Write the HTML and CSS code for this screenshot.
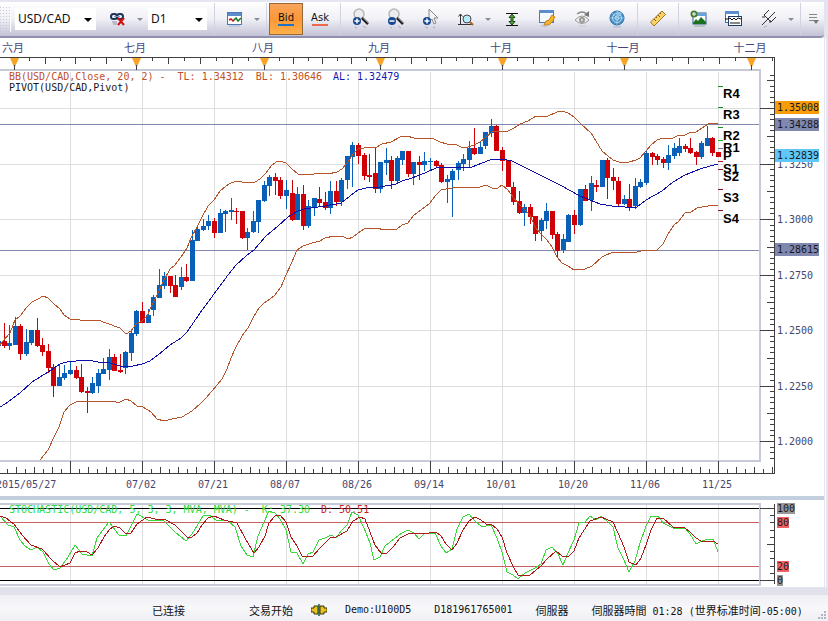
FILE: index.html
```html
<!DOCTYPE html>
<html lang="zh">
<head>
<meta charset="utf-8">
<title>USD/CAD D1</title>
<link rel="stylesheet" href="styles.css">
</head>
<body>
<header class="toolbar">
  <span class="grip"></span>
  <label class="picker picker-symbol"><select aria-label="Symbol"><option>USD/CAD</option></select></label>
  <button class="tool" aria-label="Unlink symbol">
    <svg width="18" height="18" viewBox="0 0 18 18"><g fill="none" stroke="#1d3558" stroke-width="2"><rect x="2" y="4" width="6" height="5" rx="2.5"/><rect x="8" y="4" width="6" height="5" rx="2.5"/></g><path d="M5 6.5h6" stroke="#7d9cc4" stroke-width="1"/><path d="M3 12h5M4 14h4" stroke="#aab" stroke-width="1.5"/><path d="m9 8 6 7m0-7-6 7" stroke="#d01010" stroke-width="2"/></svg>
  </button>
  <button class="drop" aria-label="Link options"></button>
  <label class="picker picker-period"><select aria-label="Period"><option>D1</option></select></label>
  <span class="sep"></span>
  <button class="tool" aria-label="Chart type">
    <svg width="16" height="18" viewBox="0 0 16 18"><rect x=".5" y="2.500" width="14" height="12" fill="#fff" stroke="#4a78b8"/><path d="M1 3h13v3H1z" fill="#5c8ccc"/><path d="m2 10 2-1 2 2 2-2" fill="none" stroke="#c01818" stroke-width="1.500"/><path d="m7 10 2-2 2 3 3-3" fill="none" stroke="#18802c" stroke-width="1.500"/><path d="M2 16h11" stroke="#a8b4cc"/></svg>
  </button>
  <button class="drop" aria-label="Chart type options"></button>
  <span class="sep"></span>
  <button class="side side-bid">Bid</button>
  <button class="side side-ask">Ask</button>
  <span class="sep"></span>
  <button class="tool" aria-label="Zoom in">
    <svg width="18" height="22" viewBox="0 0 18 22"><circle cx="7" cy="6" r="5" fill="#ececec" stroke="#b8b8b8" stroke-width="1.500"/><path d="m10 10 6 6" stroke="#222" stroke-width="2.500"/><path d="m11 10 5 5" stroke="#999" stroke-width=".7"/><circle cx="5" cy="13" r="4" fill="#184890"/><path d="M2.500 13h5M5 10.500v5" stroke="#fff" stroke-width="1.500"/><path d="m3 19 2 1m6-2 3 2" stroke="#a8a8b8"/></svg>
  </button>
  <button class="tool" aria-label="Zoom out">
    <svg width="18" height="22" viewBox="0 0 18 22"><circle cx="7" cy="6" r="5" fill="#ececec" stroke="#b8b8b8" stroke-width="1.500"/><path d="m10 10 6 6" stroke="#222" stroke-width="2.500"/><path d="m11 10 5 5" stroke="#999" stroke-width=".7"/><circle cx="5" cy="13" r="4" fill="#184890"/><path d="M2.500 13h5" stroke="#fff" stroke-width="1.500"/><path d="m3 19 2 1m6-2 3 2" stroke="#a8a8b8"/></svg>
  </button>
  <button class="tool" aria-label="Zoom to selection">
    <svg width="18" height="22" viewBox="0 0 18 22"><path d="M7 1v13l3-3 2 5 2-1-2-5h4z" fill="#f4f4f4" stroke="#888"/><circle cx="5" cy="13" r="4" fill="#184890"/><path d="M2.500 13h5M5 10.500v5" stroke="#fff" stroke-width="1.500"/><path d="m3 19 3 1m5-1 2 1" stroke="#a8a8b8"/></svg>
  </button>
  <button class="tool" aria-label="Fit scale">
    <svg width="18" height="18" viewBox="0 0 18 18"><path d="M3.500 4v11M1.500 6.500l2-2.500 2 2.500M1 14.500h14" fill="none" stroke="#333"/><circle cx="10" cy="9" r="4" fill="#b8ecf8" stroke="#445"/><path d="m13 12 3 3" stroke="#b06020" stroke-width="2"/></svg>
  </button>
  <button class="drop" aria-label="Scale options"></button>
  <button class="tool" aria-label="Fit vertically">
    <svg width="16" height="18" viewBox="0 0 16 18"><path d="M2 3.500h12M2 15.500h12" stroke="#111"/><path d="m8 4 3 3.500H9v4h2L8 15l-3-3.500h2v-4H5z" fill="#4c9c38" stroke="#1c4c18"/></svg>
  </button>
  <button class="tool" aria-label="Edit note">
    <svg width="18" height="20" viewBox="0 0 18 20"><rect x="1.500" y="1.500" width="14" height="12" fill="#f4f8ff" stroke="#4a78b8"/><path d="M1 1h15v3H1z" fill="#5c8ccc"/><path d="m6 16 2-4 3-1 3-5 3 2-3 5-3 3z" fill="#f4b428" stroke="#c88418"/><path d="M3 17h6" stroke="#a8b4cc"/></svg>
  </button>
  <button class="tool" aria-label="Show or hide">
    <svg width="18" height="20" viewBox="0 0 18 20"><path d="M2 11q7-8 14 0-7 7-14 0z" fill="#eee" stroke="#999"/><circle cx="9" cy="11" r="3" fill="#999"/><circle cx="9" cy="11" r="1" fill="#eee"/><path d="M4 5q5-4 10 0" fill="none" stroke="#888" stroke-width="1.500"/><path d="M16 2v6l-5-2z" fill="#777"/><path d="M5 17h8" stroke="#ccc"/></svg>
  </button>
  <button class="tool" aria-label="Web">
    <svg width="18" height="20" viewBox="0 0 18 20"><circle cx="9" cy="9" r="7" fill="#4c94cc" stroke="#2c6ca4"/><g fill="none" stroke="#b8dcf0"><circle cx="9" cy="9" r="4.500"/><circle cx="9" cy="9" r="2"/><path d="m9 9 5-5M9 9 4 4M9 2v14M2 9h14" stroke-width=".6"/></g><path d="M9 9V2l5 2z" fill="#8cc4e8"/><path d="M5 18h8" stroke="#a8b8cc"/></svg>
  </button>
  <span class="sep"></span>
  <button class="tool" aria-label="Ruler">
    <svg width="18" height="20" viewBox="0 0 18 20"><path d="M1.500 13 13 2l3.500 3.500L5 17z" fill="#f8d468" stroke="#a87820"/><path d="m5 10 2 2m0-4 1 1m1-3 2 2m0-4 1 1" stroke="#805818"/></svg>
  </button>
  <span class="sep"></span>
  <button class="tool" aria-label="Add image">
    <svg width="18" height="20" viewBox="0 0 18 20"><rect x="3" y="4" width="13" height="11" fill="#fff" stroke="#2c5c90"/><path d="M3 4h13v3H3z" fill="#68a4dc"/><path d="m3 14 3-4 2 2 3-4 5 5v2H3z" fill="#187020"/><circle cx="4" cy="5" r="3.500" fill="#487c30"/><path d="M2 5h4M4 3v4" stroke="#fff"/><path d="M4 17h11" stroke="#98a898"/></svg>
  </button>
  <button class="tool" aria-label="Add indicator">
    <svg width="20" height="20" viewBox="0 0 20 20"><rect x="1.500" y="2.500" width="13" height="11" fill="#fff" stroke="#4070b0"/><path d="M1 2h14v3H1z" fill="#5c8ccc"/><rect x="4.500" y="7.500" width="13" height="9" fill="#fff" stroke="#223c68"/><path d="M1 10h3l2-1 2 2 2-2 2 2 2-2 3 1M6 14h10" fill="none" stroke="#111"/></svg>
  </button>
  <button class="tool" aria-label="Draw lines">
    <svg width="18" height="20" viewBox="0 0 18 20"><path d="M2 16 15 3M4 6l7 7M4 6l5-5M11 13l5-5M2 8h3M10 14v-3" fill="none" stroke="#333"/><path d="m4 18 3-1" stroke="#b4b4c0"/></svg>
  </button>
  <button class="drop" aria-label="Line options"></button>
  <span class="sep"></span>
  <button class="overflow" aria-label="More tools">
    <svg width="10" height="12" viewBox="0 0 10 12"><path d="M0 1.500h8M0 4.500h8M0 7.500h5" stroke="#888"/><path d="M4 7h6l-3 4z" fill="#777"/></svg>
  </button>
</header>
<main class="workspace">
  <svg id="price" class="plot" viewBox="0 38 824 458" role="img" aria-label="USD/CAD price"></svg>
  <div class="splitter"></div>
  <svg id="stochastic" class="plot" viewBox="0 500 824 87" role="img" aria-label="Stochastic"></svg>
</main>
<footer class="status">
  <span class="cjk status-link">已连接</span>
  <span class="cjk">交易开始</span>
  <svg class="plug" width="16" height="12" viewBox="0 0 16 12"><path d="M0 4h3V2h4v8H3V8H0z" fill="#f0c020" stroke="#303808"/><path d="M16 4h-3V2H9v8h4V8h3z" fill="#f0c020" stroke="#303808"/><path d="M8 0v12" stroke="#18583c" stroke-width="1.500"/></svg>
  <span>Demo:U100D5</span>
  <span>D181961765001</span>
  <span class="cjk">伺服器</span>
  <span class="clock"><span class="cjk">伺服器時間</span> 01:28 (<span class="cjk">世界标准时间</span>-05:00)</span>
  <svg class="resize" width="9" height="9" viewBox="0 0 9 9"><path d="M7 1h2M4 4h2m1 0h2M1 7h2m1 0h2m1 0h2" stroke="#b4b4c4" stroke-width="2"/></svg>
</footer>
<script src="chart.js"></script>
</body>
</html>
```
FILE: styles.css
```css
* { box-sizing: border-box; }

body {
  margin: 0;
  min-height: 100vh;
  display: flex;
  flex-direction: column;
  background: #e4e4ef;
  font-family: "DejaVu Sans Mono", "Noto Sans CJK SC", monospace;
  font-size: 10px;
  color: #111;
}

button {
  border: 0;
  padding: 0;
  background: none;
  font: inherit;
  color: inherit;
}

.toolbar {
  display: flex;
  align-items: center;
  height: 38px;
  margin-right: 4px;
  border-top: 2px solid #e6e6f2;
  border-bottom: 2px solid #9090ae;
  border-radius: 0 0 4px 0;
  background: linear-gradient(#ffffff, #f0f0f6 50%, #c2c2d6);
}

.grip {
  width: 11px;
  height: 26px;
  margin-right: 2px;
  border-right: 1px solid #fff;
  background: radial-gradient(circle, #c8c8d4 1px, transparent 1px) 2px 0 / 3px 3px;
}

.picker {
  position: relative;
  flex: none;
  height: 22px;
  margin: 0 4px 0 2px;
  background: #fff;
}
.picker-symbol { width: 81px; }
.picker-period { width: 59px; }
.picker select {
  width: 100%;
  height: 100%;
  padding: 0 0 2px 3px;
  border: 0;
  appearance: none;
  background: transparent;
  font: 12px "Noto Sans", sans-serif;
  color: #111;
}
.picker::after {
  content: "";
  position: absolute;
  right: 4px;
  top: 10px;
  border: 4px solid transparent;
  border-top-color: #000;
  border-bottom: 0;
}

.tool {
  flex: none;
  display: grid;
  place-items: center;
  width: 35px;
  height: 32px;
}

.drop {
  flex: none;
  display: grid;
  place-items: center;
  width: 9px;
  height: 32px;
  margin-right: 2px;
}
.drop::after {
  content: "";
  border: 3px solid transparent;
  border-top-color: #8c8c98;
  border-bottom: 0;
}

.sep {
  flex: none;
  width: 1px;
  height: 32px;
  margin: 0 2px 0 3px;
  background: #d2d2e0;
}

.side {
  flex: none;
  display: flex;
  flex-direction: column;
  align-items: center;
  justify-content: center;
  gap: 1px;
  width: 34px;
  height: 32px;
  font: 10px "DejaVu Sans", sans-serif;
}
.side::after {
  content: "";
  width: 16px;
  height: 2px;
  background: #f06848;
}
.side-bid {
  border: 1px solid #946838;
  background: linear-gradient(#f8a45c, #fb9838 50%, #ffb048);
}
.side-bid::after { background: #2070c8; }

.overflow {
  flex: 1;
  display: grid;
  place-items: center;
  height: 32px;
}

.workspace {
  margin-right: 2px;
  padding-right: 1px;
  border-right: 1px solid #fff;
}

.plot {
  display: block;
  width: 100%;
  height: auto;
  background: #fff;
}
.splitter { height: 4px; background: #c4cfde; }

.status {
  flex: 1;
  display: flex;
  align-items: flex-start;
  gap: 23px;
  min-height: 33px;
  margin-top: 1px;
  padding: 8px 2px 0 152px;
  border-top: 7px solid #e1e1ec;
  background: linear-gradient(#efeff5, #f8f8fb 50%, #efeff4);
  line-height: 14px;
  white-space: nowrap;
}
.status > * { flex: none; }
.cjk { font-family: "Noto Sans CJK SC", sans-serif; font-size: 11px; }
.status-link { margin-right: 41px; }
.plug { margin: 1px -5px; }
.clock { margin-right: -20px; }
.resize { margin: 8px 0 0 auto; }

/* Chart */
svg text { white-space: pre; font-family: "DejaVu Sans Mono", monospace; font-size: 10px; }
svg .month { font-family: "Noto Sans CJK SC", sans-serif; font-size: 11px; fill: #46467c; text-anchor: middle; }
svg .label { fill: #46466c; }
svg .center { text-anchor: middle; }
svg .pivot { font: bold 13px "Liberation Sans", sans-serif; fill: #000; }
svg .dark { fill: #181820; }
svg .band-text { fill: #c05028; }
svg .mid-text { fill: #1818b0; }
svg .k-text { fill: #30dc40; }
svg .d-text { fill: #c82020; }
.crisp { shape-rendering: crispEdges; }
.grid { stroke: #dedee0; }
.frame { stroke: #c6cad6; stroke-width: 2; fill: none; }
.axis { stroke: #404040; fill: none; }
.level { stroke: #8088b0; }
.up { fill: #0860b8; }
.down { fill: #d00008; }
.band { stroke: #b45428; fill: none; }
.mid { stroke: #1010a8; fill: none; }
.k { stroke: #38d838; fill: none; }
.d { stroke: #b01818; fill: none; }
.limit { stroke: #000; }
.zone { stroke: #c86060; }
.marker { fill: #f8a428; }
```
FILE: chart.js
```js
const NS = "http://www.w3.org/2000/svg";
const price = document.getElementById("price");
const stoch = document.getElementById("stochastic");

function add(parent, tag, attrs, text) {
  const el = document.createElementNS(NS, tag);
  for (const name in attrs) el.setAttribute(name, attrs[name]);
  if (text !== undefined) el.textContent = text;
  parent.appendChild(el);
  return el;
}
const path = (p, cls, d) => add(p, "path", { class: cls + " crisp", d });
const label = (p, x, y, cls, text) => add(p, "text", { x, y, class: cls }, text);
const rect = (p, x, y, width, height, fill) => add(p, "rect", { x, y, width, height, fill });
const hline = (y, x1, x2) => `M${x1} ${y + 0.5}H${x2}`;
const vline = (x, y1, y2) => `M${x + 0.5} ${y1}V${y2}`;
const curve = (p, cls, pts) => add(p, "polyline", { class: cls + " crisp", points: pts });

const gridX = [70, 142, 214, 286, 358, 430, 502, 574, 646, 718];
const gridY = [108, 164, 219, 275, 330, 386, 441];

// Plot frame and grid
path(price, "grid", gridX.map(x => vline(x, 72, 460)).join("") + gridY.map(y => hline(y, 0, 759)).join(""));
path(price, "frame", "M0 70H760V461H0");

// Month ruler
const months = [["六月", 14], ["七月", 136], ["八月", 264], ["九月", 380], ["十月", 502], ["十一月", 624], ["十二月", 751]];
let ruler = hline(57, 0, 774) + vline(772, 57, 61);
months.forEach(([name, x], i) => {
  label(price, x - 1, 52, "month", name);
  if (months[i + 1]) {
    const step = (months[i + 1][1] - x) / 8;
    for (let n = 1; n < 8; n++) ruler += vline(Math.round(x + n * step), 57, n % 2 ? 61 : 64);
  }
});
path(price, "axis", ruler);
months.forEach(([, x]) => {
  add(price, "path", { class: "marker", d: `M${x - 4} 58h9l-4.500 10z` });
  path(price, "axis", vline(x, 65, 70));
});

// Date and price rulers
let axes = hline(473, 0, 775) + vline(774, 57, 474);
for (let n = -7; n <= 78; n++) {
  const x = 70 + n * 9;
  if (x > 0 && x < 774) axes += vline(x, n % 8 === 0 ? 461 : n % 2 ? 469 : 467, 473);
}
for (let n = -6; n <= 63; n++) {
  const y = Math.round(108 + n * 5.55);
  axes += hline(y, n % 10 === 0 ? 760 : n % 5 === 0 ? 767 : 770, 774);
}
path(price, "axis", axes);
label(price, -4, 488, "label", "2015/05/27");
["07/02", "07/21", "08/07", "08/26", "09/14", "10/01", "10/20", "11/06", "11/25"]
  .forEach((text, i) => label(price, gridX[i + 1] - 1, 488, "label center", text));
["1.3250", "1.3000", "1.2750", "1.2500", "1.2250", "1.2000"]
  .forEach((text, i) => label(price, 777, gridY[i + 1] + 4, "label", text));

path(price, "level", hline(124, 0, 759) + hline(250, 0, 759));

// Candles: high, body top, body bottom, low, direction
const candles = `341 341 346 346 u;323 341 346 348 d;325 343 346 350 u;317 326 345 345 u;324 326 354 360 d;329 342 354 356 u;330 330 343 345 u;318 330 346 347 d;338 345 352 356 d;344 351 368 373 d;364 367 386 397 d;364 377 386 386 u;365 373 378 380 u;361 370 374 375 u;366 370 378 379 d;364 377 392 393 d;387 391 393 413 d;377 383 393 394 u;369 373 386 393 u;358 369 374 374 u;349 357 370 380 u;354 357 371 371 d;354 370 372 373 d;351 352 368 374 u;330 333 353 361 u;310 311 334 336 u;302 311 323 323 d;309 315 323 323 u;295 297 310 316 u;269 285 298 298 u;272 276 286 289 u;276 276 286 293 d;275 285 297 297 d;267 277 287 290 u;264 277 281 282 d;230 240 281 281 u;225 229 241 241 u;219 226 230 231 u;215 221 226 230 u;218 221 233 238 d;209 213 233 233 u;210 211 214 232 u;198 210 212 220 u;208 211 212 224 d;211 211 238 239 d;228 232 238 250 u;211 221 232 233 u;200 200 222 233 u;181 185 201 202 u;175 177 186 196 u;173 177 181 195 d;177 180 196 199 d;180 190 196 209 u;180 193 220 221 d;187 194 220 220 u;185 194 226 230 d;200 206 226 228 u;198 198 207 216 u;187 199 203 206 d;192 202 208 210 d;181 191 208 214 u;181 191 202 206 d;178 180 202 206 u;156 156 180 189 u;142 145 157 187 u;143 145 156 164 d;153 155 176 180 d;154 175 177 182 d;148 173 189 193 d;162 162 189 193 u;148 160 163 175 u;156 160 181 189 d;156 158 181 184 u;151 151 160 165 u;151 151 174 177 d;162 162 174 185 u;156 162 165 180 d;152 161 165 171 u;158 161 162 171 u;160 161 166 168 d;163 165 182 183 d;175 179 182 203 u;169 171 180 217 u;161 163 170 180 u;154 159 164 171 u;141 148 160 167 u;128 148 154 155 d;142 147 154 154 u;132 132 146 149 u;119 126 133 137 u;125 126 151 151 d;147 150 161 171 d;160 160 187 187 d;182 187 202 205 d;191 201 213 214 d;204 207 213 226 u;204 207 217 224 d;216 216 234 241 d;218 220 231 241 u;203 211 221 229 u;211 211 235 239 d;232 234 251 257 d;234 239 250 253 u;214 215 242 242 u;210 215 225 234 d;189 189 225 226 u;185 189 201 201 d;176 183 200 211 u;180 185 187 192 d;160 160 187 187 u;158 160 178 199 d;168 177 181 190 d;177 181 204 207 d;195 199 204 205 u;184 199 207 211 d;178 186 206 209 u;179 182 187 188 u;151 153 183 185 u;152 153 157 165 d;154 156 160 165 d;157 159 163 168 d;145 155 163 170 u;143 148 156 159 u;138 146 153 156 u;144 146 149 152 d;138 148 153 154 d;151 152 157 165 d;141 143 157 159 u;126 138 146 146 u;137 138 153 156 d;152 152 157 157 d`;
let up = "", down = "";
candles.split(";").forEach((row, i) => {
  const [high, top, bottom, low, dir] = row.split(" ");
  const x = Math.round(i * 72 / 13 - 2);
  const d = `M${x} ${high}h1V${low}h-1zM${x - 2} ${top}h5V${bottom}h-5z`;
  if (dir === "u") up += d; else down += d;
});
path(price, "up", up);
path(price, "down", down);

// Bollinger bands
curve(price, "band", "0,345 3,341 10,333 15,320 20,316 27,307 32,302 38,299 43,296 48,298 54,304 60,309 64,315 70,319 80,320 86,321 98,320 106,323 120,328 126,334 131,331 136,324 142,321 147,316 152,305 158,293 163,282 170,269 175,265 181,257 187,248 191,238 197,227 202,217 208,206 214,200 220,191 226,186 231,183 237,181 242,182 255,182 260,179 266,173 271,166 276,162 280,161 286,163 292,169 298,174 304,175 325,173 328,174 337,172 342,169 348,162 353,154 358,149 370,147 375,148 382,144 391,142 400,137 407,136 414,138 432,138 440,142 447,144 457,145 463,148 468,147 474,145 480,142 486,137 492,132 502,131 508,131 514,128 520,124 528,121 536,116 548,116 557,112 562,111 568,113 574,117 580,123 591,133 596,141 602,151 608,156 613,160 619,162 629,162 636,160 640,158 646,151 651,145 657,140 663,138 673,138 679,135 685,135 691,132 696,132 702,128 708,124 718,123");
curve(price, "mid", "0,407 5,404 20,393 32,382 48,372 60,364 70,361 76,361 88,360 98,362 110,363 120,366 133,366 142,364 150,361 158,355 170,345 181,338 187,332 200,313 214,294 228,275 236,265 246,256 254,250 266,236 278,226 288,217 298,211 304,209 325,206 341,203 350,196 358,190 366,188 380,187 396,184 402,181 412,178 425,173 436,168 447,167 472,167 482,163 490,160 502,159 512,161 524,167 540,175 560,185 580,196 600,204 612,206 625,207 637,207 646,200 662,191 673,182 685,175 700,169 710,166 718,164");
curve(price, "band", "40,460 48,450 54,437 59,427 64,412 70,405 76,402 87,401 112,401 116,402 120,402 126,399 131,401 137,406 143,407 151,412 157,419 164,421 172,419 182,417 192,411 200,404 206,398 212,391 222,379 227,369 231,358 236,347 242,336 248,328 254,316 259,308 264,303 270,299 275,295 281,287 286,275 292,262 297,250 303,246 312,243 320,241 325,238 334,236 342,236 348,239 353,237 358,233 364,229 375,228 386,230 397,229 402,225 408,223 413,216 430,203 435,196 441,190 446,189 452,188 470,187 480,187 486,185 492,188 498,188 502,185 508,190 513,197 519,204 530,215 535,227 541,234 547,240 552,247 557,257 562,263 568,266 574,270 585,269 592,266 602,257 613,252 637,252 645,250 657,250 663,244 668,234 674,225 679,221 685,213 691,212 697,208 708,206 718,205");

// Pivot levels: name, baseline, tick height, tick colour
[["R4", 98, 86, "#189018"], ["R3", 119, 107, "#189018"], ["R2", 140, 127, "#189018"], ["R1", 152, 140, "#18c818"],
 ["P", 160, 148, "#708090"], ["S1", 173, 161, "#c01828"], ["S2", 181, 169, "#901020"], ["S3", 202, 189, "#901020"], ["S4", 223, 210, "#901020"]]
  .forEach(([name, base, tick, color]) => {
    rect(price, 718, tick, 5, 1, color);
    label(price, 723, base, "pivot", name);
  });

// Legends
label(price, 9, 80, "band-text", "BB(USD/CAD,Close, 20, 2) -  TL: 1.34312  BL: 1.30646");
label(price, 333, 80, "mid-text", "AL: 1.32479");
label(price, 9, 91, "dark", "PIVOT(USD/CAD,Pivot)");

// Price tags
[["1.35008", 101, "#f89c08"], ["1.34288", 118, "#8088b0"], ["1.32839", 149, "#60c8f8"], ["1.28615", 243, "#8088b0"]]
  .forEach(([text, y, fill]) => {
    rect(price, 775, y, 44, 13, fill);
    label(price, 777, y + 10, "dark", text);
  });

// Stochastic pane
path(stoch, "grid", gridX.map(x => vline(x, 505, 584)).join(""));
path(stoch, "frame", "M0 504H760V585H0");
path(stoch, "zone", hline(522, 0, 759) + hline(566, 0, 759));
path(stoch, "limit", hline(508, 0, 759) + hline(580, 0, 759));
let scale = vline(774, 504, 584);
for (let n = 0; n <= 10; n++) {
  scale += hline(Math.round(508 + n * 7.2), n % 10 === 0 ? 760 : n === 5 ? 767 : 770, 774);
}
path(stoch, "axis", scale);
label(stoch, 9, 513, "k-text", "STOCHASTIC(USD/CAD, 5, 3, 3, MVA, MVA) -  K: 37.30");
label(stoch, 321, 513, "d-text", "D: 50.51");
curve(stoch, "k", "0,516 8,525 14,527 20,540 25,546 31,550 37,547 43,552 49,564 54,570 60,568 68,557 75,545 82,554 92,556 97,538 109,522 119,535 126,536 137,514 148,520 163,520 175,532 186,541 192,534 203,516 209,515 216,520 228,521 235,527 241,546 247,555 253,557 258,536 264,522 269,511 275,513 280,519 286,530 291,552 297,553 303,564 308,554 313,552 319,540 325,538 331,535 336,538 342,530 347,525 352,512 358,515 364,528 370,543 374,560 380,557 385,546 395,538 402,533 408,530 414,533 419,539 425,533 435,533 441,546 446,553 452,549 457,529 463,517 469,514 475,521 481,526 486,526 491,525 497,538 502,552 507,572 513,575 518,579 525,573 535,568 541,564 546,550 552,547 558,554 563,565 568,553 574,540 579,523 585,522 590,516 596,520 601,516 607,521 613,527 618,548 624,560 629,572 635,561 640,543 646,526 651,516 658,516 663,523 673,528 685,528 690,534 696,544 707,539 713,539 718,552");
curve(stoch, "d", "0,516 6,518 14,524 22,535 31,545 42,549 52,560 60,567 70,563 75,553 80,551 87,552 92,555 98,548 104,537 109,530 114,526 120,528 125,533 131,533 137,524 147,517 155,519 164,519 175,525 187,537 192,537 197,533 202,525 208,518 214,516 224,520 237,523 246,540 254,553 259,547 265,536 269,523 275,516 280,515 286,522 291,537 297,546 302,556 312,557 320,548 331,537 336,537 347,531 353,521 360,517 365,519 370,532 375,545 381,553 386,554 393,547 400,538 410,533 417,533 422,534 436,532 441,536 446,544 452,550 457,543 463,530 469,521 475,517 481,520 486,524 491,524 497,529 502,537 507,553 513,566 518,575 530,575 541,566 547,559 556,551 562,556 568,557 574,551 579,538 590,521 601,517 613,522 618,533 624,547 629,562 636,565 641,558 646,545 651,530 657,518 663,518 673,527 685,528 690,532 696,538 701,541 713,541 718,544");
[["100", 503, 18, "#989898"], ["80", 517, 12, "#f06060"], ["20", 561, 12, "#f06060"], ["0", 575, 6, "#989898"]]
  .forEach(([text, y, width, fill]) => {
    rect(stoch, 777, y, width, 11, fill);
    label(stoch, 777, y + 9, "dark", text);
  });
```
